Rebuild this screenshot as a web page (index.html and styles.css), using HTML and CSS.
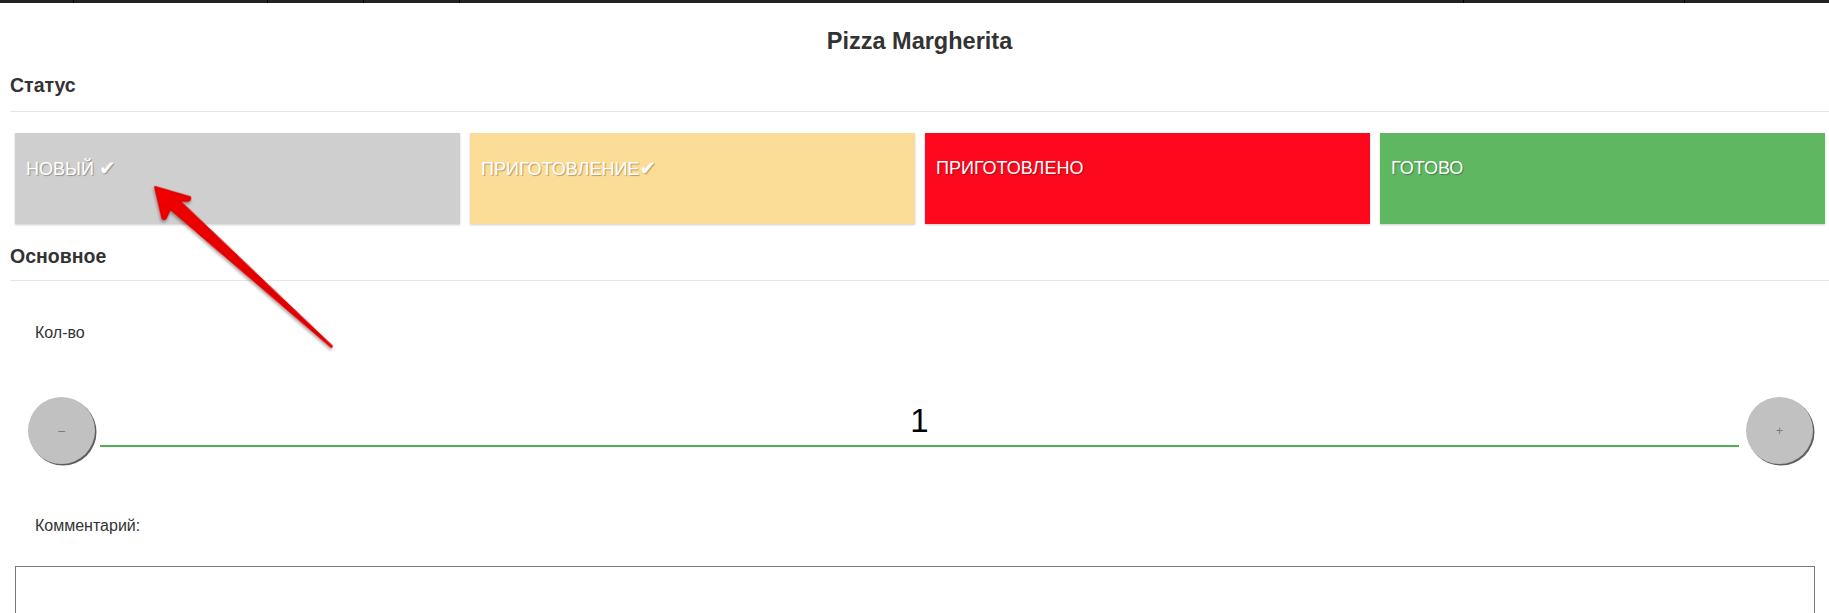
FILE: index.html
```html
<!DOCTYPE html>
<html lang="ru">
<head>
<meta charset="utf-8">
<title>Pizza Margherita</title>
<link rel="stylesheet" href="styles.css">
</head>
<body>
<div class="topbar">
  <span class="tab t1"></span><span class="tab t2"></span><span class="tab t3"></span><span class="tab t4"></span><span class="tab t5"></span><span class="tab t6"></span><span class="tab t7"></span>
</div>
<main class="page">
  <h1 class="title">Pizza Margherita</h1>
  <h2 class="section">Статус</h2>
  <hr class="rule">
  <div class="statuses">
    <div class="status s-new">НОВЫЙ <span class="check">✔</span></div>
    <div class="status s-cooking">ПРИГОТОВЛЕНИЕ<span class="check">✔</span></div>
    <div class="status s-cooked">ПРИГОТОВЛЕНО</div>
    <div class="status s-ready">ГОТОВО</div>
  </div>
  <h2 class="section section-main">Основное</h2>
  <hr class="rule rule-main">
  <label class="field-label qty-label">Кол-во</label>
  <div class="stepper">
    <button class="round-btn" type="button">–</button>
    <input class="qty-input" type="text" value="1">
    <button class="round-btn plus" type="button">+</button>
  </div>
  <label class="field-label comment-label">Комментарий:</label>
  <textarea class="comment"></textarea>
</main>
<svg class="arrow" width="1829" height="613" viewBox="0 0 1829 613" xmlns="http://www.w3.org/2000/svg">
  <defs>
    <linearGradient id="ag" x1="0" y1="0" x2="1" y2="0">
      <stop offset="0" stop-color="#f20000"/>
      <stop offset="1" stop-color="#d40000"/>
    </linearGradient>
    <filter id="sh" x="-20%" y="-20%" width="140%" height="140%">
      <feDropShadow dx="1" dy="2" stdDeviation="1.5" flood-color="#000" flood-opacity="0.35"/>
    </filter>
  </defs>
  <g transform="translate(155 187) rotate(42.1)" filter="url(#sh)">
    <path d="M0 0 L33 -16 Q36 -14 33 -11 L27 -6 L238 -0.6 L238 0.6 L26 6 L29 16 Q29 19 26 18 Z" fill="url(#ag)" stroke="#e00000" stroke-width="2" stroke-linejoin="round"/>
  </g>
</svg>
</body>
</html>
```

FILE: styles.css
```css
html, body {
  margin: 0;
  padding: 0;
  background: #fff;
  overflow: hidden;
}
body {
  position: relative;
  width: 1829px;
  height: 613px;
  font-family: "Liberation Sans", Arial, "DejaVu Sans", sans-serif;
  color: #333;
}
.topbar {
  display: flex;
  height: 3px;
  background: #222;
}
.tab {
  height: 3px;
  border-right: 1px solid #000;
  box-sizing: border-box;
}
.t1 { width: 74px; }
.t2 { width: 194px; }
.t3 { width: 96px; }
.t4 { width: 96px; }
.t5 { width: 1004px; }
.t6 { width: 221px; }
.t7 { flex: 1; border-right: 0; }

.page {
  margin-left: 10px;
  display: flex;
  flex-direction: column;
  align-items: stretch;
}
.title {
  margin: 25px 0 0;
  font-size: 23.5px;
  line-height: 26px;
  font-weight: bold;
  text-align: center;
  color: #333;
}
.section {
  margin: 20px 0 0;
  font-size: 19.5px;
  line-height: 22px;
  font-weight: bold;
  color: #333;
}
.rule {
  margin: 15px 0 0;
  border: 0;
  border-top: 1px solid #e6e6e6;
  height: 0;
}
.statuses {
  margin: 21px 0 0 5px;
  display: grid;
  grid-template-columns: repeat(4, 445px);
  column-gap: 10px;
}
.status {
  height: 91px;
  box-sizing: border-box;
  padding: 24px 10px 0 11px;
  font-size: 18px;
  line-height: 22px;
  color: #fff;
  text-shadow: 1px 1px 1px rgba(0, 0, 0, 0.3);
  box-shadow: 0 1px 2px rgba(0, 0, 0, 0.2);
}
.check {
  font-family: "DejaVu Sans", sans-serif;
  font-size: 20px;
  line-height: 22px;
}
.s-new { background: #cfcfcf; }
.s-cooking { background: #fcdd97; }
.s-cooked { background: #fd081d; }
.s-ready { background: #5fb762; }

.section-main { margin-top: 21px; }
.rule-main { margin-top: 13px; }

.field-label {
  display: block;
  font-size: 16px;
  line-height: 18px;
  color: #333;
  padding-left: 25px;
}
.qty-label { margin-top: 43px; }

.stepper {
  margin: 55px 0 0 18px;
  display: flex;
  align-items: flex-start;
}
.round-btn {
  width: 67px;
  height: 67px;
  flex: none;
  border: 0;
  border-radius: 50%;
  background: #c1c1c1;
  box-shadow: 1.5px 1.5px 0.5px #5f5f5f;
  color: #777;
  font-family: "Liberation Sans", Arial, sans-serif;
  font-size: 12px;
  padding: 0;
}
.qty-input {
  width: 1639px;
  height: 50px;
  margin: 0 7px 0 5px;
  box-sizing: border-box;
  border: 0;
  border-bottom: 2px solid #4caf50;
  padding: 0;
  background: transparent;
  font-family: "Liberation Sans", Arial, sans-serif;
  font-size: 33px;
  color: #000;
  text-align: center;
  outline: none;
}
.comment-label { margin-top: 53px; }
.comment {
  display: block;
  margin: 31px 0 0 5px;
  width: 1800px;
  height: 120px;
  box-sizing: border-box;
  border: 1px solid #7a7a7a;
  resize: none;
}
.arrow {
  position: absolute;
  left: 0;
  top: 0;
  pointer-events: none;
}
```
